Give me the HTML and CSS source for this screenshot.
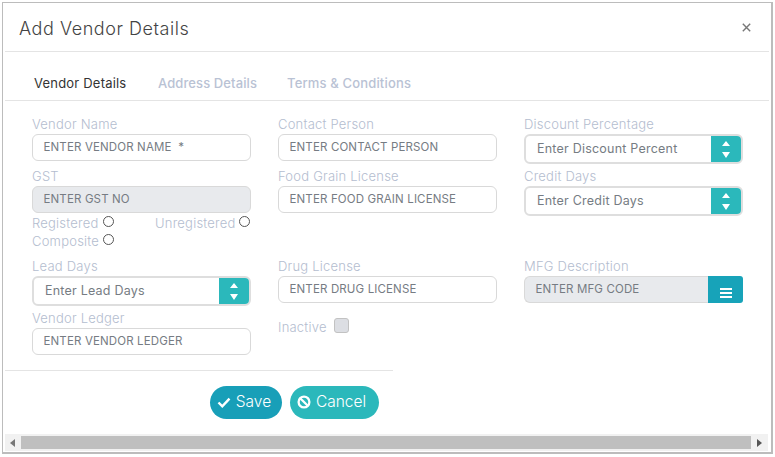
FILE: index.html
```html
<!DOCTYPE html>
<html lang="en">
<head>
<meta charset="utf-8">
<title>Add Vendor Details</title>
<link rel="stylesheet" href="styles.css">
</head>
<body>
<div class="dialog">
  <header class="head">
    <h1 class="title">Add Vendor Details</h1>
    <svg class="close" width="9" height="9" viewBox="0 0 9 9"><path d="M.8.8l7.4 7.4M8.2.8L.8 8.2" stroke="#777" stroke-width="1.4" fill="none"/></svg>
  </header>
  <nav class="tabs">
    <span class="tab tab-active">Vendor Details</span>
    <span class="tab tab-a">Address Details</span>
    <span class="tab tab-t">Terms &amp; Conditions</span>
  </nav>
  <form class="grid">
    <div class="field"><label class="lbl">Vendor Name</label><div class="input">ENTER VENDOR NAME &nbsp;*</div></div>
    <div class="field"><label class="lbl">Contact Person</label><div class="input">ENTER CONTACT PERSON</div></div>
    <div class="field"><label class="lbl">Discount Percentage</label>
      <div class="spin"><span class="spin-text">Enter Discount Percent</span><span class="spin-btn"><svg width="12" height="19" viewBox="0 0 12 19"><path d="M6 1l4 5H2zM6 18l-4-6h8z" fill="#fff"/></svg></span></div></div>

    <div class="field"><label class="lbl">GST</label><div class="input input-off">ENTER GST NO</div>
      <div class="radios">
        <span class="radio r-reg">Registered<i class="dot"></i></span>
        <span class="radio r-unreg">Unregistered<i class="dot"></i></span>
        <span class="radio">Composite<i class="dot"></i></span>
      </div></div>
    <div class="field"><label class="lbl">Food Grain License</label><div class="input">ENTER FOOD GRAIN LICENSE</div></div>
    <div class="field"><label class="lbl">Credit Days</label>
      <div class="spin"><span class="spin-text">Enter Credit Days</span><span class="spin-btn"><svg width="12" height="19" viewBox="0 0 12 19"><path d="M6 1l4 5H2zM6 18l-4-6h8z" fill="#fff"/></svg></span></div></div>

    <div class="field"><label class="lbl">Lead Days</label>
      <div class="spin"><span class="spin-text">Enter Lead Days</span><span class="spin-btn"><svg width="12" height="19" viewBox="0 0 12 19"><path d="M6 1l4 5H2zM6 18l-4-6h8z" fill="#fff"/></svg></span></div></div>
    <div class="field"><label class="lbl">Drug License</label><div class="input">ENTER DRUG LICENSE</div></div>
    <div class="field"><label class="lbl">MFG Description</label>
      <div class="mfg"><span class="mfg-text">ENTER MFG CODE</span><span class="mfg-btn"><svg width="12" height="10" viewBox="0 0 12 10"><path d="M0 1h12M0 5h12M0 9h12" stroke="#fff" stroke-width="2"/></svg></span></div></div>

    <div class="field"><label class="lbl">Vendor Ledger</label><div class="input">ENTER VENDOR LEDGER</div></div>
    <div class="inactive"><span class="lbl">Inactive</span><i class="check"></i></div>
  </form>
  <div class="rule"></div>
  <div class="actions">
    <button type="button" class="btn btn-save"><svg width="14" height="11" viewBox="0 0 14 11"><path d="M1.5 5.5l3.8 3.8 7.2-7.6" stroke="#fff" stroke-width="2.4" fill="none"/></svg>Save</button>
    <button type="button" class="btn btn-cancel"><svg width="14" height="14" viewBox="0 0 14 14"><circle cx="7" cy="7" r="5.4" stroke="#fff" stroke-width="2.3" fill="none"/><path d="M3.2 3.2l7.6 7.6" stroke="#fff" stroke-width="2.3"/></svg>Cancel</button>
  </div>
  <div class="scrollbar">
    <svg width="5" height="8" viewBox="0 0 5 8"><path d="M5 0v8L0 4z" fill="#777"/></svg>
    <div class="thumb"></div>
    <svg width="5" height="8" viewBox="0 0 5 8"><path d="M0 0v8l5-4z" fill="#555"/></svg>
  </div>
</div>
</body>
</html>
```
FILE: styles.css
```css
* { box-sizing: border-box; }
html, body { margin: 0; padding: 0; background: #fff; }
body { padding: 2px; font-family: Inter, "Liberation Sans", sans-serif; width: 775px; height: 457px; overflow: hidden; }
.dialog { width: 771px; height: 452px; border: 1px solid #bcbcbc; border-width: 1px 2px 2px 1px; padding: 0 2px 0 2px; background: #fff; display: flex; flex-direction: column; }
.head { height: 49px; border-bottom: 1px solid #e4e4e4; display: flex; align-items: center; justify-content: space-between; padding: 3px 18px 0 14px; flex: none; }
.title { margin: 0; font-size: 18px; font-weight: 300; color: #444; letter-spacing: .55px; }
.close { margin-top: -3px; }
.tabs { height: 49px; border-bottom: 1px solid #e4e4e4; display: flex; align-items: center; padding: 13px 0 0 29px; flex: none; font-size: 13px; font-weight: 500; color: #b9c2d4; letter-spacing: .1px; }
.tab { white-space: nowrap; }
.tab-active { color: #333; width: 124px; font-weight: 400; letter-spacing: .2px; }
.tab-a { width: 129px; }
.tab-t { letter-spacing: .16px; }
.grid { display: grid; grid-template-columns: repeat(3, 219px); grid-template-rows: 45px 83px 45px 45px; column-gap: 27px; row-gap: 7px; padding: 15px 0 0 27px; flex: none; }
.lbl { display: block; height: 18px; line-height: 16px; font-size: 13px; font-weight: 300; color: #b4bdcf; white-space: nowrap; letter-spacing: .22px; }
.input { height: 27px; border: 1px solid #d9d9d9; border-radius: 6px; padding: 0 10.5px; line-height: 25px; font-size: 11.5px; color: #767c83; white-space: nowrap; background: #fff; letter-spacing: .14px; }
.input-off { background: #e8eaed; }
.radios { display: flex; flex-wrap: wrap; font-size: 13px; font-weight: 300; color: #b4bdcf; letter-spacing: .22px; margin-top: 1px; }
.radio { display: inline-flex; align-items: center; height: 18px; white-space: nowrap; width: 219px; }
.radios .r-reg { width: 123px; }
.radios .r-unreg { width: 96px; }
.dot { width: 11px; height: 11px; border: 1px solid #555; border-radius: 50%; margin: -4px 0 0 4px; flex: none; }
.r-unreg .dot { margin-left: 3px; }
.spin { height: 30px; width: 219px; border: 2px solid #dedede; border-radius: 6px; display: flex; align-items: center; justify-content: space-between; font-size: 12.5px; color: #767c83; overflow: hidden; background: #fff; letter-spacing: .22px; }
.spin-text { padding: 0 0 2px 11px; white-space: nowrap; font-weight: 400; }
.spin-btn { width: 30px; height: 100%; background: #2bb8bb; display: flex; align-items: center; justify-content: center; flex: none; }
.mfg { height: 27px; display: flex; font-size: 11.5px; color: #767c83; letter-spacing: .14px; }
.mfg-text { flex: 1; padding-left: 10.5px; line-height: 25px; white-space: nowrap; background: #e8eaed; border: 1px solid #d9d9d9; border-right: 0; border-radius: 6px 0 0 6px; }
.mfg-btn { width: 35px; background: #17a3b9; border-radius: 0 3px 3px 0; display: flex; justify-content: center; align-items: flex-end; padding-bottom: 5px; }
.inactive { display: flex; align-items: center; gap: 7px; height: 30px; padding-top: 3px; }
.inactive .lbl { height: auto; line-height: 18px; }
.check { width: 15px; height: 15px; background: #dcdee3; border: 1px solid #c2c2c2; border-radius: 3px; margin-top: -2px; }
.rule { width: 388px; height: 1px; background: #e4e4e4; margin-top: 15px; flex: none; }
.actions { display: flex; gap: 8px; margin: 15px 0 0 205px; flex: none; }
.btn { height: 33px; border: 0; border-radius: 17px; color: #fff; font-family: inherit; font-size: 15.5px; font-weight: 300; display: flex; align-items: center; justify-content: center; gap: 5px; padding: 0 0 2px; }
.btn svg { margin-top: 1px; }
.btn-save { width: 72px; background: #189fb8; padding-right: 4px; }
.btn-cancel { width: 89px; background: #2bb8bb; padding-right: 6px; }
.scrollbar { margin-top: 15px; height: 17px; width: 763px; background: #f1f1f1; display: flex; align-items: center; justify-content: space-between; padding: 0 6px 0 5px; flex: none; }
.thumb { width: 730px; height: 13px; background: #bfbfbf; }
```
